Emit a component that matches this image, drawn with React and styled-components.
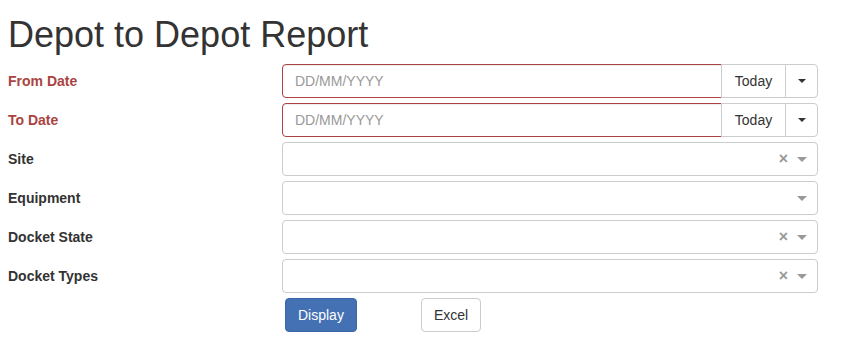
import React from 'react';
import styled, { createGlobalStyle } from 'styled-components';

const Global = createGlobalStyle`
  body {
    margin: 0;
    background: #fff;
    font-family: "Liberation Sans", Arial, sans-serif;
    font-size: 14px;
    color: #333;
  }
`;

const Page = styled.div`
  padding: 0 8px;
  width: 810px;
`;

const Titulo = styled.h1`
  font-size: 36px;
  font-weight: 500;
  line-height: 1.1;
  margin: 15px 0 9px;
  color: #333;
`;

const Formulario = styled.form`
  display: grid;
  grid-template-columns: 274px 536px;
  row-gap: 5px;
  align-items: center;
`;

const Etiqueta = styled.label`
  font-weight: bold;
  font-size: 14px;
  color: ${(p) => (p.$error ? '#a94442' : '#333')};
`;

const Grupo = styled.div`
  display: flex;
  height: 34px;
`;

const CampoFecha = styled.input`
  flex: 1;
  min-width: 0;
  box-sizing: border-box;
  height: 34px;
  border: 1px solid #a94442;
  border-radius: 4px 0 0 4px;
  padding: 6px 12px;
  font-family: inherit;
  font-size: 14px;
  color: #555;
  box-shadow: inset 0 1px 1px rgba(0, 0, 0, 0.075);
  outline: none;
  &::placeholder {
    color: #999;
  }
`;

const BotonGrupo = styled.button`
  box-sizing: border-box;
  height: 34px;
  width: ${(p) => p.$ancho}px;
  flex: none;
  margin-left: -1px;
  border: 1px solid #ccc;
  border-radius: ${(p) => (p.$ultimo ? '0 4px 4px 0' : '0')};
  background: #fff;
  font-family: inherit;
  font-size: 14px;
  color: #333;
  display: flex;
  align-items: center;
  justify-content: center;
  padding: 0;
`;

const Caret = styled.span`
  width: 0;
  height: 0;
  border-left: 4px solid transparent;
  border-right: 4px solid transparent;
  border-top: 4px solid ${(p) => p.$color || '#333'};
`;

const Selector = styled.div`
  box-sizing: border-box;
  height: 34px;
  border: 1px solid #ccc;
  border-radius: 4px;
  background: #fff;
  display: flex;
  align-items: center;
  justify-content: flex-end;
  padding-right: 10px;
  gap: 9px;
`;

const Limpiar = styled.span`
  font-size: 16px;
  font-weight: bold;
  color: #999;
  line-height: 1;
`;

const FlechaSelect = styled(Caret)`
  border-left-width: 5px;
  border-right-width: 5px;
  border-top-width: 5px;
  margin-top: 2px;
`;

const Acciones = styled.div`
  display: flex;
  gap: 64px;
  margin: 0 0 0 3px;
`;

const Boton = styled.button`
  box-sizing: border-box;
  height: 34px;
  padding: 6px 12px;
  border-radius: 4px;
  font-family: inherit;
  font-size: 14px;
  border: 1px solid ${(p) => (p.$primario ? '#3a66a3' : '#ccc')};
  background: ${(p) => (p.$primario ? '#4471b4' : '#fff')};
  color: ${(p) => (p.$primario ? '#fff' : '#333')};
`;

const selectores = [
  { nombre: 'Site', limpiar: true },
  { nombre: 'Equipment', limpiar: false },
  { nombre: 'Docket State', limpiar: true },
  { nombre: 'Docket Types', limpiar: true },
];

function App() {
  return (
    <Page>
      <Global />
      <Titulo>Depot to Depot Report</Titulo>
      <Formulario>
        {['From Date', 'To Date'].map((f) => (
          <React.Fragment key={f}>
            <Etiqueta $error>{f}</Etiqueta>
            <Grupo>
              <CampoFecha placeholder="DD/MM/YYYY" />
              <BotonGrupo type="button" $ancho={65}>Today</BotonGrupo>
              <BotonGrupo type="button" $ancho={33} $ultimo>
                <Caret />
              </BotonGrupo>
            </Grupo>
          </React.Fragment>
        ))}
        {selectores.map((s) => (
          <React.Fragment key={s.nombre}>
            <Etiqueta>{s.nombre}</Etiqueta>
            <Selector>
              {s.limpiar && <Limpiar>×</Limpiar>}
              <FlechaSelect $color="#999" />
            </Selector>
          </React.Fragment>
        ))}
        <span />
        <Acciones>
          <Boton type="button" $primario>Display</Boton>
          <Boton type="button">Excel</Boton>
        </Acciones>
      </Formulario>
    </Page>
  );
}

export default App;
